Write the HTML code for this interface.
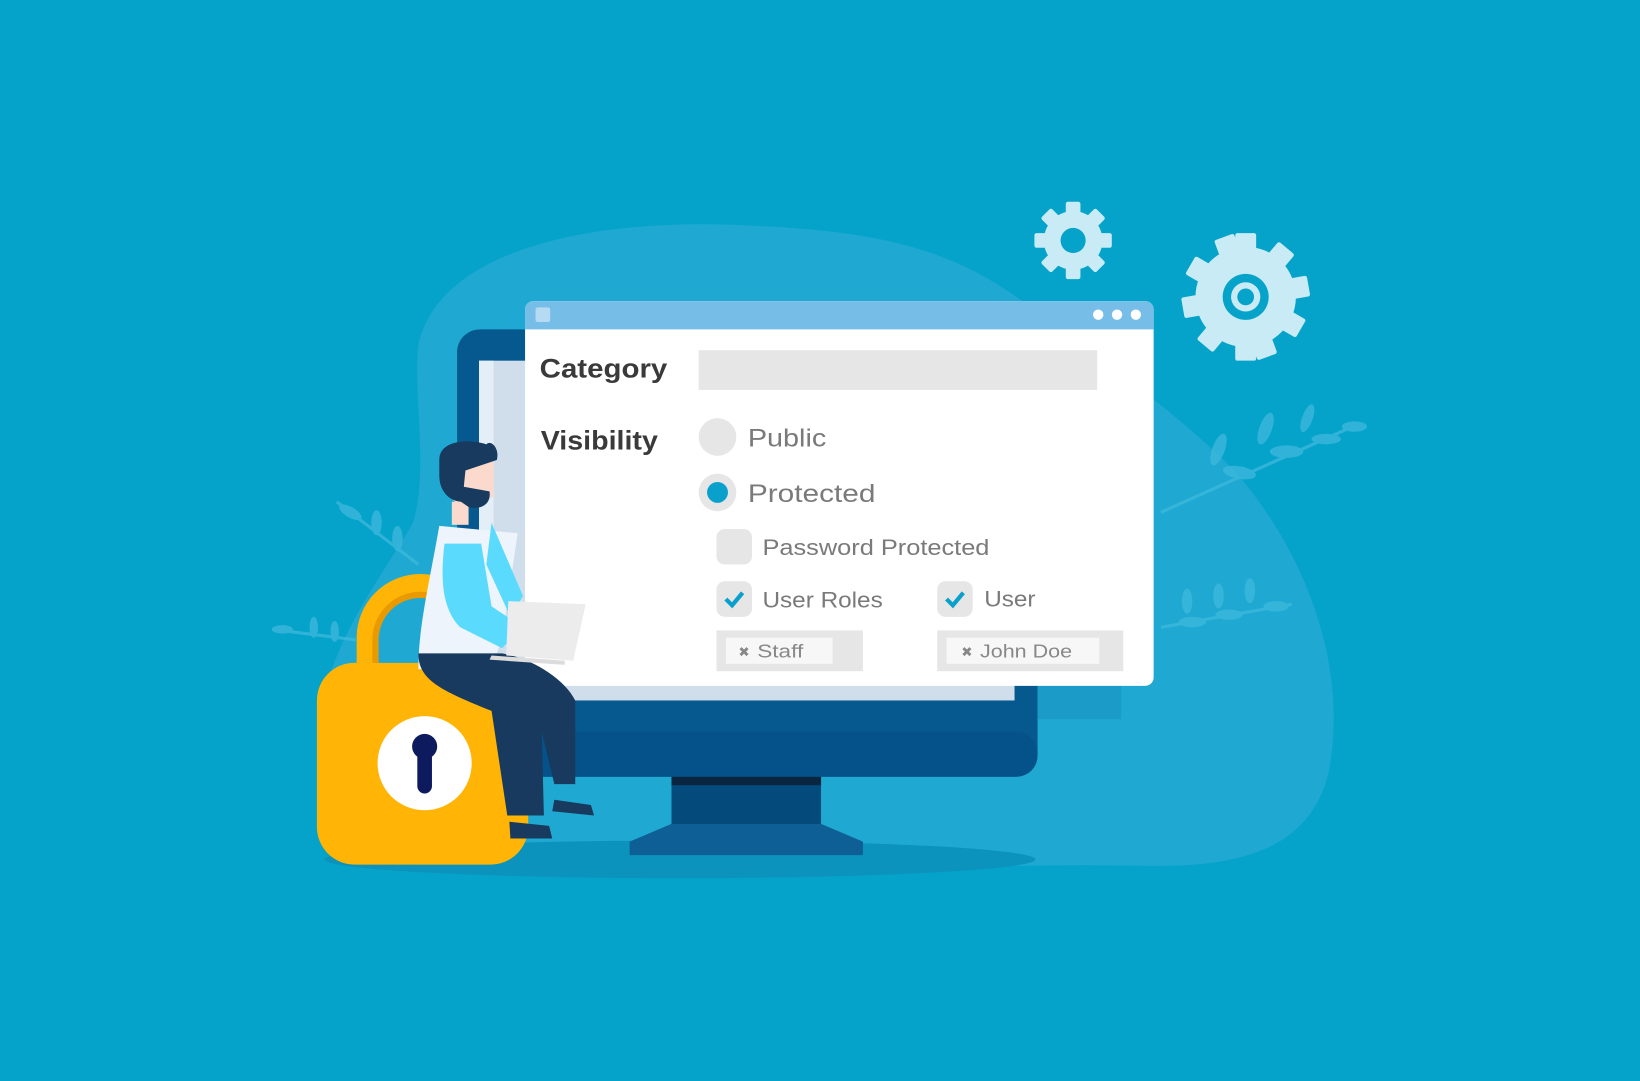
<!DOCTYPE html>
<html><head><meta charset="utf-8"><style>html,body{margin:0;padding:0;background:#05a3c9;overflow:hidden}svg{display:block}</style></head>
<body>
<svg width="1640" height="1081" viewBox="0 0 1568 1034" preserveAspectRatio="none" xmlns="http://www.w3.org/2000/svg" font-family="Liberation Sans, sans-serif">
<rect width="1568" height="1034" fill="#05a3c9"/>
<path d="M400 330 C420 240 560 210 700 215 C820 220 900 230 980 290 C1060 350 1120 390 1180 450 C1250 530 1290 640 1270 740 C1250 820 1170 830 1090 828 C900 825 700 840 500 835 C380 832 300 800 305 700 C310 620 360 560 395 500 C410 450 395 380 400 330 Z" fill="#1fa9d2"/>
<g fill="#3cb8dd" opacity="0.8">
<path d="M1110 490 L1300 405" stroke="#3cb8dd" stroke-width="3"/>
<ellipse cx="1165" cy="430" rx="6" ry="16" transform="rotate(20 1165 430)"/><ellipse cx="1210" cy="410" rx="6" ry="16" transform="rotate(20 1210 410)"/><ellipse cx="1250" cy="400" rx="5" ry="14" transform="rotate(20 1250 400)"/>
<ellipse cx="1185" cy="452" rx="16" ry="6" transform="rotate(10 1185 452)"/><ellipse cx="1230" cy="432" rx="16" ry="6"/><ellipse cx="1268" cy="420" rx="14" ry="5"/><ellipse cx="1295" cy="408" rx="12" ry="5"/>
<path d="M1110 600 L1235 578" stroke="#3cb8dd" stroke-width="3"/>
<ellipse cx="1135" cy="575" rx="5" ry="12"/><ellipse cx="1165" cy="570" rx="5" ry="12"/><ellipse cx="1195" cy="565" rx="5" ry="12"/><ellipse cx="1140" cy="595" rx="13" ry="5"/><ellipse cx="1175" cy="588" rx="13" ry="5"/><ellipse cx="1220" cy="580" rx="12" ry="5"/>
<path d="M260 602 L340 612 M322 480 L400 540" stroke="#3cb8dd" stroke-width="3"/>
<ellipse cx="335" cy="490" rx="12" ry="5" transform="rotate(30 335 490)"/><ellipse cx="360" cy="500" rx="5" ry="12"/><ellipse cx="380" cy="515" rx="5" ry="12"/><ellipse cx="270" cy="602" rx="10" ry="4"/><ellipse cx="300" cy="600" rx="4" ry="10"/><ellipse cx="320" cy="604" rx="4" ry="10"/>
</g>
<ellipse cx="650" cy="822" rx="340" ry="18" fill="#0b93bd"/>
<rect x="992" y="640" width="80" height="48" fill="#1b9cc8"/>
<rect x="437" y="315" width="555" height="428" rx="22" fill="#06598e"/>
<rect x="437" y="700" width="555" height="43" rx="20" fill="#05528a"/>
<rect x="458" y="345" width="512" height="325" fill="#cfdeea"/>
<rect x="458" y="345" width="14" height="325" fill="#e4eef6"/>
<rect x="642" y="743" width="143" height="47" fill="#044a7a"/>
<rect x="642" y="743" width="143" height="8" fill="#0a2540"/>
<path d="M642 788 L785 788 L825 805 L825 818 L602 818 L602 805 Z" fill="#0e5f95"/>
<rect x="502" y="288" width="601" height="368" rx="8" fill="#fff"/>
<path d="M510 288 H1095 A8 8 0 0 1 1103 296 V315 H502 V296 A8 8 0 0 1 510 288 Z" fill="#76bde8"/>
<rect x="512" y="294" width="14" height="14" rx="2" fill="#b5daf2"/>
<circle cx="1050" cy="301" r="5" fill="#fff"/><circle cx="1068" cy="301" r="5" fill="#fff"/><circle cx="1086" cy="301" r="5" fill="#fff"/>
<text x="516" y="361" font-size="26" fill="#3a3a3a" font-weight="bold" textLength="122" lengthAdjust="spacingAndGlyphs">Category</text>
<rect x="668" y="335" width="381" height="38" fill="#e6e6e6"/>
<text x="517" y="430" font-size="26" fill="#3a3a3a" font-weight="bold" textLength="112" lengthAdjust="spacingAndGlyphs">Visibility</text>
<circle cx="686" cy="418" r="18" fill="#e6e6e6"/>
<text x="715" y="427" font-size="24" fill="#7a7a7a" textLength="75" lengthAdjust="spacingAndGlyphs">Public</text>
<circle cx="686" cy="471" r="18" fill="#e6e6e6"/><circle cx="686" cy="471" r="10" fill="#0aa0cc"/>
<text x="715" y="480" font-size="24" fill="#7a7a7a" textLength="122" lengthAdjust="spacingAndGlyphs">Protected</text>
<rect x="685" y="506" width="34" height="34" rx="8" fill="#e6e6e6"/>
<text x="729" y="531" font-size="21" fill="#7a7a7a" textLength="217" lengthAdjust="spacingAndGlyphs">Password Protected</text>
<rect x="685" y="556" width="34" height="34" rx="8" fill="#e6e6e6"/>
<path d="M694 573 L700 579 L710 567" stroke="#0aa0cc" stroke-width="4" fill="none"/>
<text x="729" y="581" font-size="21" fill="#7a7a7a" textLength="115" lengthAdjust="spacingAndGlyphs">User Roles</text>
<rect x="896" y="556" width="34" height="34" rx="8" fill="#e6e6e6"/>
<path d="M905 573 L911 579 L921 567" stroke="#0aa0cc" stroke-width="4" fill="none"/>
<text x="941" y="580" font-size="21" fill="#7a7a7a" textLength="49" lengthAdjust="spacingAndGlyphs">User</text>
<rect x="685" y="603" width="140" height="39" fill="#e6e6e6"/><rect x="694" y="610" width="102" height="25" fill="#f7f7f7"/>
<text x="706" y="628" font-size="13" fill="#888">✖</text><text x="724" y="629" font-size="18" fill="#888" textLength="44" lengthAdjust="spacingAndGlyphs">Staff</text>
<rect x="896" y="603" width="178" height="39" fill="#e6e6e6"/><rect x="905" y="610" width="146" height="25" fill="#f7f7f7"/>
<text x="919" y="628" font-size="13" fill="#888">✖</text><text x="937" y="629" font-size="18" fill="#888" textLength="88" lengthAdjust="spacingAndGlyphs">John Doe</text>
<g fill="#c8ebf5">
<circle cx="1026" cy="230" r="28"/>
<g><rect x="1019" y="193" width="14" height="74" rx="2"/><rect x="1019" y="193" width="14" height="74" rx="2" transform="rotate(45 1026 230)"/><rect x="1019" y="193" width="14" height="74" rx="2" transform="rotate(90 1026 230)"/><rect x="1019" y="193" width="14" height="74" rx="2" transform="rotate(135 1026 230)"/></g>
<circle cx="1191" cy="284" r="48"/>
<g><rect x="1181" y="223" width="20" height="122" rx="2"/><rect x="1181" y="223" width="20" height="122" rx="2" transform="rotate(40 1191 284)"/><rect x="1181" y="223" width="20" height="122" rx="2" transform="rotate(80 1191 284)"/><rect x="1181" y="223" width="20" height="122" rx="2" transform="rotate(120 1191 284)"/><rect x="1181" y="223" width="20" height="122" rx="2" transform="rotate(160 1191 284)"/></g>
</g>
<circle cx="1026" cy="230" r="12" fill="#05a3c9"/>
<circle cx="1191" cy="284" r="22" fill="#05a3c9"/><circle cx="1191" cy="284" r="14" fill="#c8ebf5"/><circle cx="1191" cy="284" r="8" fill="#05a3c9"/>
<path d="M350 640 V610 A52 52 0 0 1 454 610 V640" stroke="#ffb406" stroke-width="18" fill="none"/>
<path d="M359 640 V612 A43 43 0 0 1 445 612" stroke="#e89a00" stroke-width="6" fill="none"/>
<rect x="303" y="634" width="202" height="193" rx="36" fill="#ffb406"/>
<circle cx="406" cy="730" r="45" fill="#fff"/>
<circle cx="406" cy="714" r="12" fill="#0d1a5e"/><rect x="399" y="714" width="14" height="45" rx="7" fill="#0d1a5e"/>
<path d="M420 503 C410 560 400 600 400 640 L470 640 L480 610 L495 510 Z" fill="#edf4fc"/>
<path d="M425 520 C420 560 425 585 440 600 L480 620 L500 600 L470 580 L460 520 Z" fill="#5adafd"/>
<path d="M470 500 L500 570 L488 590 L465 540 Z" fill="#5adafd"/>
<path d="M400 625 C400 650 420 660 470 680 L485 780 L520 780 L518 700 L530 750 L550 750 L550 670 C540 650 510 630 480 625 Z" fill="#173a5e"/>
<path d="M487 786 L525 790 L528 802 L488 802 Z" fill="#173a5e"/>
<path d="M530 765 L565 770 L568 780 L528 776 Z" fill="#173a5e"/>
<path d="M486 575 L560 578 L548 632 L484 627 Z" fill="#ececec"/>
<path d="M470 627 L540 632 L540 636 L468 631 Z" fill="#dcdcdc"/>
<rect x="432" y="480" width="16" height="22" fill="#fbd9cd"/>
<path d="M425 445 C430 420 465 418 472 440 L472 475 L440 485 L425 470 Z" fill="#fbd9cd"/>
<path d="M420 440 C420 420 450 420 465 425 C470 420 478 430 475 440 L445 450 L442 480 C430 480 420 470 420 455 Z" fill="#173a5e"/>
<path d="M440 465 L468 470 C470 482 460 488 448 485 L438 478 Z" fill="#173a5e"/>
</svg>
</body></html>
